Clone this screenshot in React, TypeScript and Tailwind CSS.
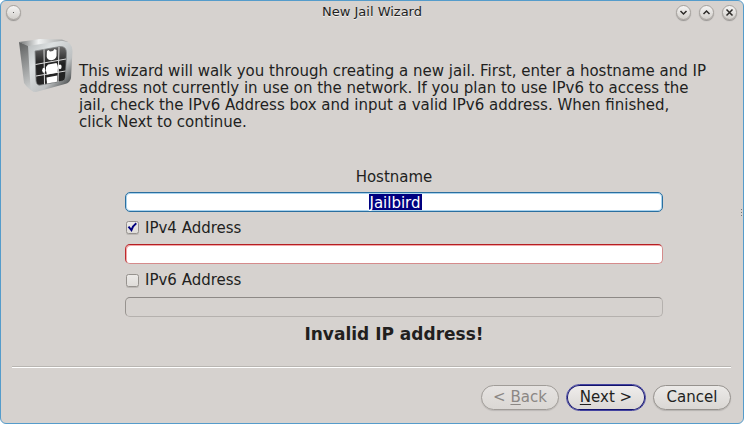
import React from 'react';

function TitleButton({ children }: { children: React.ReactNode }) {
  return (
    <button className="flex size-[15px] shrink-0 items-center justify-center rounded-full border border-[#a5a19d] bg-linear-to-b from-[#f6f5f4] to-[#d2cfcb] shadow-[0_1px_1px_rgba(0,0,0,0.3)]">
      {children}
    </button>
  );
}

function TitleIcon({ d }: { d: string }) {
  return (
    <svg width="9" height="9" viewBox="0 0 9 9" className="shrink-0" fill="none" stroke="#2c2a28" strokeWidth="1.5">
      <path d={d} />
    </svg>
  );
}

function CheckBox({ label, checked }: { label: string; checked?: boolean }) {
  return (
    <div className="flex h-[17px] items-center">
      <span className={`ml-[1px] flex size-[13px] items-center justify-center rounded-[2.5px] border border-[#96928e] bg-linear-to-b from-[#eceae8] to-[#dfdcd9] shadow-[0_1px_0_rgba(0,0,0,0.12)] ${checked ? 'mb-[2px]' : 'mb-0'}`}>
        {checked && (
          <svg width="11" height="11" viewBox="0 0 11 11" className="shrink-0" fill="none" stroke="#00007f" strokeWidth="2">
            <path d="M1.5 4.7L4.4 8.1Q6 3.7 9.3 1.3" />
          </svg>
        )}
      </span>
      <span className="ml-[6px]">{label}</span>
    </div>
  );
}

function JailIcon() {
  return (
    <svg width="56" height="56" viewBox="0 0 56 56" className="shrink-0">
      <defs>
        <linearGradient id="side" x1="0" y1="0" x2="0.2" y2="1">
          <stop offset="0" stopColor="#5c5e5e" />
          <stop offset="0.45" stopColor="#8d8f8f" />
          <stop offset="1" stopColor="#c8caca" />
        </linearGradient>
        <linearGradient id="top" x1="0" y1="0" x2="1" y2="0">
          <stop offset="0" stopColor="#707272" />
          <stop offset="0.4" stopColor="#f0f2f2" />
          <stop offset="1" stopColor="#9a9c9c" />
        </linearGradient>
        <linearGradient id="frame" x1="0" y1="0" x2="1" y2="1">
          <stop offset="0" stopColor="#b4b8b9" />
          <stop offset="0.3" stopColor="#dde1e2" />
          <stop offset="0.65" stopColor="#bdc0c1" />
          <stop offset="0.85" stopColor="#5d6061" />
          <stop offset="1" stopColor="#7d8081" />
        </linearGradient>
        <linearGradient id="glass" x1="0" y1="0" x2="0" y2="1">
          <stop offset="0" stopColor="#6a6a6a" />
          <stop offset="0.45" stopColor="#202020" />
          <stop offset="1" stopColor="#262626" />
        </linearGradient>
      </defs>
      <path d="M1 4L12 8L16 54Q10 51 6 45Z" fill="url(#side)" />
      <path d="M1 4L22 1L44 1.5L50 4L12 9Z" fill="url(#top)" />
      <path d="M10 8L43 3Q54 2 54.5 13L53 40Q52 45 47 46L18 54Q13 54 12.5 49Z" fill="url(#frame)" />
      <path d="M17 13L42 8.5Q48.5 8 48.5 15L47.5 39Q47.5 42 45 43L23 47Q18.5 48 18 43Z" fill="url(#glass)" stroke="#85898a" strokeWidth="0.8" />
      <g stroke="#dedede" strokeWidth="1" fill="none">
        <path d="M26 11.5L26.5 46.5M41 9L40 44M17.5 26.5L48 21M18 38L47.5 33" />
      </g>
      <g fill="#fff">
        <path d="M29 13L30.5 12L32 13.5L35 13L36.5 11L38.5 12L38.5 18Q37.5 22 33.5 22.2Q29 22 28.7 18.5Z" />
        <path d="M30 26.5L38.5 25Q40 27 40 30L39.5 34.5L29 36.5Q27.5 33 28 29Z" />
        <ellipse cx="25.8" cy="32.3" rx="1.6" ry="2.5" />
        <ellipse cx="42" cy="28.8" rx="1.6" ry="2.4" />
        <path d="M28.5 39.5L39.3 37.5L39 43.7L29 45.5Z" />
      </g>
    </svg>
  );
}

export default function App() {
  return (
    <div className="h-[424px] w-[744px] bg-white font-['DejaVu_Sans',sans-serif] text-[15px] leading-[17px] text-[#221f1e]">
      <div className="flex h-full flex-col rounded-[6px] border border-[#559ccb] bg-[#d6d2cf]">
        <header className="flex h-[22px] shrink-0 items-center pl-[5px] pr-[6px]">
          <TitleButton><span className="size-px bg-[#555]" /></TitleButton>
          <h1 className="ml-[47px] flex-1 text-center text-[13px] leading-[20px] [text-shadow:0_1px_0_#f2f1f0]">New Jail Wizard</h1>
          <div className="flex gap-[8px]">
            <TitleButton><TitleIcon d="M1.5 3L4.5 6L7.5 3" /></TitleButton>
            <TitleButton><TitleIcon d="M1.5 6L4.5 3L7.5 6" /></TitleButton>
            <TitleButton><TitleIcon d="M1.5 1.5L7.5 7.5M7.5 1.5L1.5 7.5" /></TitleButton>
          </div>
        </header>

        <section className="flex h-[108px] shrink-0 pl-[17px] pt-[15px]">
          <JailIcon />
          <p className="ml-[5px] mt-[25px] whitespace-nowrap">
            This wizard will walk you through creating a new jail. First, enter a hostname and IP<br />
            address not currently in use on the network. If you plan to use IPv6 to access the<br />
            jail, check the IPv6 Address box and input a valid IPv6 address. When finished,<br />
            click Next to continue.
          </p>
        </section>

        <main className="relative ml-[124px] mt-[38px] flex w-[538px] flex-col">
          <label className="text-center leading-[17px]">Hostname</label>
          <div className="mt-[6px] flex h-[20px] justify-center rounded-[5px] border border-[#2b6f9f] bg-white pl-[3px] pt-px shadow-[inset_0_0_0_1px_#a9d3ee]">
            <span className="h-[16px] bg-[#00007f] pr-px leading-[18px] text-white">Jailbird</span>
          </div>
          <div className="mt-[8px]"><CheckBox label="IPv4 Address" checked /></div>
          <div className="mt-[7px] h-[20px] rounded-[5px] border border-[#d58b8b] border-l-[#bd2a2d] border-t-[#b51e22] bg-white shadow-[inset_1px_1px_0_#f1a7a8]" />
          <div className="mt-[8px]"><CheckBox label="IPv6 Address" /></div>
          <div className="mt-[8px] h-[20px] rounded-[5px] border border-[#b5b1ae] border-l-[#97938f] border-t-[#8d8986]" />
          <p className="mt-[7px] text-center text-[17px] font-bold leading-[20px]">Invalid IP address!</p>
          <div className="absolute left-[616px] top-[40px] flex flex-col gap-[2px]">
            <span className="size-px bg-[#777]" />
            <span className="size-px bg-[#777]" />
            <span className="size-px bg-[#777]" />
          </div>
        </main>

        <footer className="ml-[11px] mr-[12px] mt-auto h-[57px] shrink-0">
          <div className="h-[2px] border-b border-t border-b-white border-t-[#b9b6b2]" />
          <div className="mt-[16px] flex items-center justify-end gap-[7px]">
            <button className="h-[25px] w-[78px] rounded-full border border-[#a09c98] bg-linear-to-b from-[#e6e3e1] to-[#dad7d4] text-[#8b8784] shadow-[0_1px_1px_rgba(0,0,0,0.12)]">&lt; <u className="underline-offset-2">B</u>ack</button>
            <button className="h-[27px] w-[80px] rounded-full border border-[#4343a0] bg-linear-to-b from-[#f0eeed] to-[#dad7d4] shadow-[inset_0_0_0_1px_#13136b]"><u className="underline-offset-2">N</u>ext &gt;</button>
            <button className="h-[25px] w-[78px] rounded-full border border-[#96928e] bg-linear-to-b from-[#eceae8] to-[#dad7d4] shadow-[0_1px_1px_rgba(0,0,0,0.15)]">Cancel</button>
          </div>
        </footer>
      </div>
    </div>
  );
}
